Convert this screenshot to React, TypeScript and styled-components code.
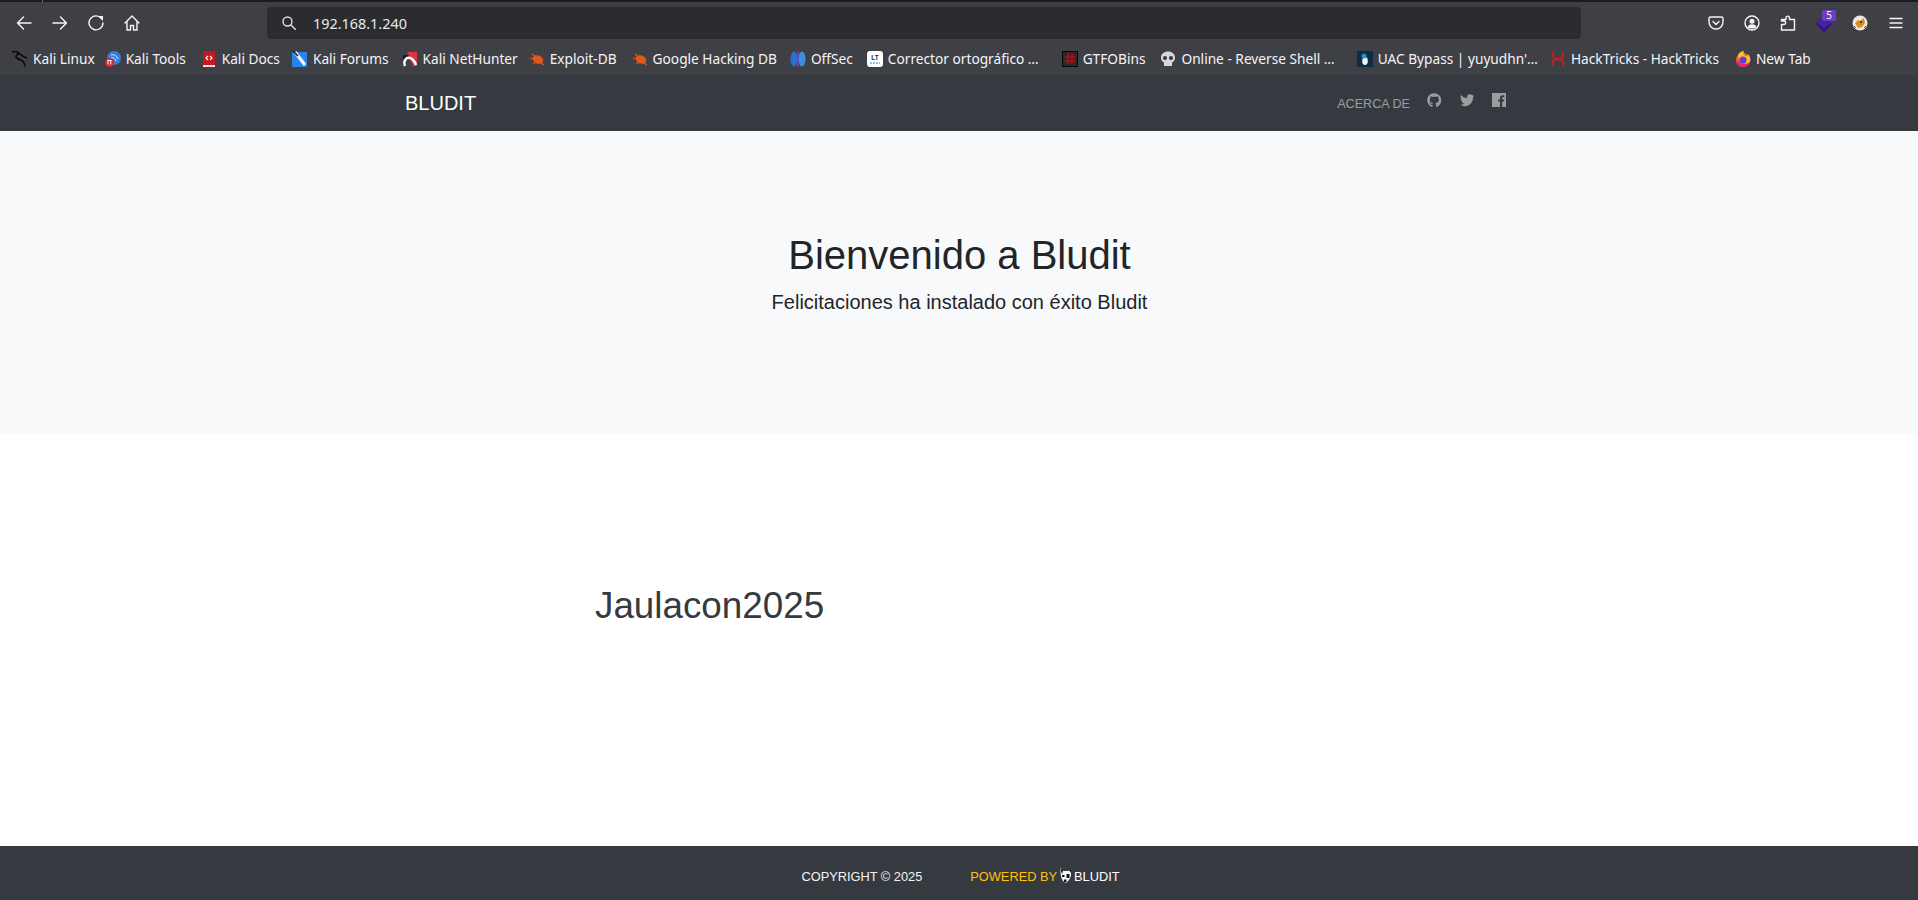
import * as React from 'react';
import styled, { createGlobalStyle } from 'styled-components';
import { FaGithub, FaTwitter } from 'react-icons/fa';

const GlobalStyle = createGlobalStyle`
  html, body {
    margin: 0;
    padding: 0;
    background: #fff;
    font-family: "Liberation Sans", Arial, sans-serif;
  }
  * { box-sizing: border-box; }
`;

type FavKind =
  | 'kali' | 'tools' | 'docs' | 'forums' | 'hunter' | 'bug' | 'offsec'
  | 'lt' | 'gtfo' | 'skull' | 'uac' | 'hack' | 'firefox';

const bookmarks: { label: string; icon: FavKind; gap: number }[] = [
  { label: 'Kali Linux', icon: 'kali', gap: 10 },
  { label: 'Kali Tools', icon: 'tools', gap: 15 },
  { label: 'Kali Docs', icon: 'docs', gap: 12 },
  { label: 'Kali Forums', icon: 'forums', gap: 13 },
  { label: 'Kali NetHunter', icon: 'hunter', gap: 11 },
  { label: 'Exploit-DB', icon: 'bug', gap: 15 },
  { label: 'Google Hacking DB', icon: 'bug', gap: 13 },
  { label: 'OffSec', icon: 'offsec', gap: 14 },
  { label: 'Corrector ortográfico …', icon: 'lt', gap: 23 },
  { label: 'GTFOBins', icon: 'gtfo', gap: 15 },
  { label: 'Online - Reverse Shell …', icon: 'skull', gap: 22 },
  { label: "UAC Bypass | yuyudhn'…", icon: 'uac', gap: 12 },
  { label: 'HackTricks - HackTricks', icon: 'hack', gap: 16 },
  { label: 'New Tab', icon: 'firefox', gap: 0 },
];

const Favicon: React.FC<{ kind: FavKind }> = ({ kind }) => {
  const art: Record<FavKind, React.ReactNode> = {
    kali: (
      <path
        d="M0 1c3-1 6 0 8 2 2 2 4 3 7 4M8 3C4 3 3 6 5 7c3 2 6 2 7 5l1 3.500M7 3.500L5 1M6 8l3 1"
        fill="none"
        stroke="#08080a"
        strokeWidth="1.6"
      />
    ),
    tools: (
      <>
        <circle cx="9" cy="7" r="7" fill="#2f80e0" />
        <path d="M6 4c3-1 6 1 7 4M6 7c2-1 4 0 5 3" fill="none" stroke="#dcebfa" strokeWidth="1" />
        <circle cx="4.500" cy="11.500" r="4.500" fill="#e0242c" />
        <path d="M3 9.500v4M5.800 9.500v4M2.500 9.500h4" stroke="#fff" strokeWidth="1" />
      </>
    ),
    docs: (
      <>
        <rect x="2" y="0" width="12" height="14" fill="#c8161e" />
        <rect x="2" y="14" width="12" height="2" fill="#e0e0e0" />
        <path d="M7 5L5 7l2 2M9 5l2 2-2 2" fill="none" stroke="#fff" strokeWidth="1.100" />
      </>
    ),
    forums: (
      <>
        <rect x="0" y="1" width="15" height="15" rx="1" fill="#2a86e6" />
        <path d="M3 1l10 13" stroke="#f2f4f6" strokeWidth="3.200" />
        <path d="M1 0l5 5" stroke="#12181f" strokeWidth="1.500" />
      </>
    ),
    hunter: (
      <>
        <path d="M5 1h10v14l-4 0z" fill="#e3323b" />
        <path d="M1 4h6L1 12z" fill="#1b1c20" />
        <path d="M3 15c-2-5 1-9 5-8 3 1 5 4 6 7" fill="none" stroke="#fff" strokeWidth="2.400" />
      </>
    ),
    bug: (
      <>
        <ellipse cx="9" cy="8.500" rx="5.500" ry="4" fill="#e3571b" transform="rotate(25 9 8.500)" />
        <path d="M1 7l4 1M3 3l4 3M4 13l3-2M15 14l-3-2" stroke="#e3571b" strokeWidth="1.100" />
      </>
    ),
    offsec: (
      <>
        <ellipse cx="4" cy="8" rx="3.500" ry="7.500" fill="#2a6fd6" />
        <ellipse cx="12" cy="8" rx="3.500" ry="7.500" fill="#3d8fd9" />
        <rect x="7.400" y="0" width="1.200" height="16" fill="#7d4bd0" />
      </>
    ),
    lt: (
      <>
        <rect x="0" y="0" width="16" height="16" rx="3" fill="#fff" />
        <text x="8" y="9" fontSize="6.500" fontWeight="700" textAnchor="middle" fill="#16324a" fontFamily="Liberation Sans">LT</text>
        <path d="M3 12h10" stroke="#2a86e6" strokeWidth="1" strokeDasharray="2 1" />
      </>
    ),
    gtfo: (
      <>
        <rect x="0.500" y="0.500" width="15" height="15" fill="#2a2a2c" stroke="#060606" />
        <path d="M6 3v10M10 3v10M3 6h10M3 10h10" stroke="#a50f12" strokeWidth="2.200" />
      </>
    ),
    skull: (
      <>
        <path d="M8 0.500c4 0 7 2.500 7 6 0 2.500-1 4-3 5v3.500H4V11.500c-2-1-3-2.500-3-5 0-3.500 3-6 7-6z" fill="#d5d7da" />
        <circle cx="5" cy="7" r="2" fill="#34363b" />
        <circle cx="11" cy="7" r="2" fill="#34363b" />
      </>
    ),
    uac: (
      <>
        <rect x="0" y="0" width="16" height="16" fill="#0c2d44" />
        <ellipse cx="8" cy="10" rx="2.800" ry="4" fill="#e8f2f7" />
        <circle cx="7" cy="5" r="2.500" fill="#2a8fd0" />
      </>
    ),
    hack: (
      <path
        d="M3 1v4c0 2 2 3 5 3s5 1 5 3v4M13 1v4c0 2-2 3-5 3s-5 1-5 3v4"
        fill="none"
        stroke="#c81e1e"
        strokeWidth="1.800"
      />
    ),
    firefox: (
      <>
        <circle cx="8" cy="9" r="7" fill="#f5701d" />
        <path d="M3 4c1 6 6 11 12 7 1-3 0-6-2-8 0 2-1 3-3 2-1-1-2-3-1-5-3 0-5 2-6 4z" fill="#ffbf2e" />
        <circle cx="8" cy="9" r="3.600" fill="#6a3bd1" />
        <path d="M1 9c0 5 4 7 7 7 4 0 6-2 7-5-3 3-8 3-11 0z" fill="#e5246f" />
      </>
    ),
  };
  return (
    <FavSvg viewBox="0 0 16 16" aria-hidden>
      {art[kind]}
    </FavSvg>
  );
};

const line = { fill: 'none', stroke: '#f4f4f6', strokeWidth: 1.4, strokeLinecap: 'round', strokeLinejoin: 'round' } as const;

const App: React.FC = () => (
  <>
    <GlobalStyle />
    <Page>
      <Browser.Strip>
        <Browser.StripMark />
      </Browser.Strip>
      <Browser.Toolbar>
        <Browser.Group>
          <Browser.Tool>
            <svg width="16" height="16" viewBox="0 0 16 16"><path d="M15 8H1.500M7.500 2L1.500 8l6 6" {...line} /></svg>
          </Browser.Tool>
          <Browser.Tool>
            <svg width="16" height="16" viewBox="0 0 16 16"><path d="M1 8h13.500M8.500 2l6 6-6 6" {...line} /></svg>
          </Browser.Tool>
          <Browser.Tool>
            <svg width="16" height="16" viewBox="0 0 16 16">
              <path d="M13.500 3.500A7 7 0 1 0 15 8" {...line} />
              <path d="M10 1h5v5z" fill="#f4f4f6" />
            </svg>
          </Browser.Tool>
          <Browser.Tool>
            <svg width="16" height="16" viewBox="0 0 16 16">
              <path d="M1 8l7-7 7 7M3 6.500V15h3.500v-4.500h3V15H13V6.500" {...line} />
            </svg>
          </Browser.Tool>
        </Browser.Group>
        <Browser.Url>
          <svg width="14" height="14" viewBox="0 0 14 14">
            <circle cx="5.500" cy="5.500" r="4.500" {...line} stroke="#e0e0e3" />
            <path d="M9 9l4.500 4.500" {...line} stroke="#e0e0e3" />
          </svg>
          <Browser.UrlText>192.168.1.240</Browser.UrlText>
        </Browser.Url>
        <Browser.Group>
          <Browser.Tool>
            <svg width="16" height="16" viewBox="0 0 16 16">
              <path d="M2.500 2h11A1.500 1.500 0 0 1 15 3.500V7a7 7 0 0 1-14 0V3.500A1.500 1.500 0 0 1 2.500 2z" {...line} />
              <path d="M5 6.500l3 3 3-3" {...line} />
            </svg>
          </Browser.Tool>
          <Browser.Tool>
            <svg width="16" height="16" viewBox="0 0 16 16">
              <circle cx="8" cy="8" r="7" {...line} />
              <circle cx="8" cy="6.300" r="2.500" fill="#f4f4f6" />
              <path d="M3.500 12c1-2 2.500-2.700 4.500-2.700s3.500.7 4.500 2.700C11 14 5 14 3.500 12z" fill="#f4f4f6" />
            </svg>
          </Browser.Tool>
          <Browser.Tool>
            <svg width="16" height="16" viewBox="0 0 16 16">
              <path d="M1.500 15V9.500H4a1.500 1.500 0 0 0 0-3.500H1.500V4.500H6V2.500a1.800 1.800 0 0 1 3.500 0v2h5V15z" {...line} />
            </svg>
          </Browser.Tool>
          <Browser.Tool>
            <svg width="18" height="18" viewBox="0 0 18 18">
              <path d="M9 5l8 5-8 8-8-8z" fill="#2b0f80" />
              <path d="M9 2l8 6-8 7-8-7z" fill="#46209f" />
            </svg>
            <Browser.Badge>5</Browser.Badge>
          </Browser.Tool>
          <Browser.Tool>
            <svg width="16" height="16" viewBox="0 0 16 16">
              <circle cx="8" cy="8" r="7.500" fill="#f0e9dd" />
              <path d="M3 8l3-3 2 1 4-3 1 5-3 4-4 1z" fill="#e08a1f" />
              <circle cx="9" cy="7" r="1" fill="#222" />
              <path d="M2 11l2 2M12 13l2-2" stroke="#555" strokeWidth="1" />
            </svg>
          </Browser.Tool>
          <Browser.Tool>
            <svg width="16" height="16" viewBox="0 0 16 16">
              <path d="M2 3.500h12M2 8h12M2 12.500h12" {...line} />
            </svg>
          </Browser.Tool>
        </Browser.Group>
      </Browser.Toolbar>
      <Browser.Bookmarks>
        {bookmarks.map((b) => (
          <Browser.Bookmark key={b.label} $gap={b.gap}>
            <Favicon kind={b.icon} />
            {b.label}
          </Browser.Bookmark>
        ))}
      </Browser.Bookmarks>

      <Nav.Bar>
        <Nav.Container>
          <Nav.Brand>BLUDIT</Nav.Brand>
          <Nav.Links>
            <Nav.Link>ACERCA DE</Nav.Link>
            <Nav.Social><FaGithub /></Nav.Social>
            <Nav.Social><FaTwitter /></Nav.Social>
            <Nav.Social>
              <svg width="14" height="14" viewBox="0 0 14 14">
                <path
                  fillRule="evenodd"
                  fill="currentColor"
                  d="M0 0h14v14h-3.800V8.600H12l.3-2.100h-2.100V5.200c0-.6.200-1 1-1h1.100V2.300c-.2 0-.9-.1-1.600-.1-1.600 0-2.700 1-2.700 2.800v1.500H6.200v2.100H8V14H0z"
                />
              </svg>
            </Nav.Social>
          </Nav.Links>
        </Nav.Container>
      </Nav.Bar>

      <Hero.Wrap>
        <Hero.Title>Bienvenido a Bludit</Hero.Title>
        <Hero.Lead>Felicitaciones ha instalado con éxito Bludit</Hero.Lead>
      </Hero.Wrap>

      <Content>
        <PostTitle>Jaulacon2025</PostTitle>
      </Content>

      <Footer.Bar>
        <Footer.Copy>COPYRIGHT © 2025</Footer.Copy>
        <Footer.Powered>
          POWERED BY
          <Footer.Logo width="11" height="16" viewBox="0 0 11 16">
            <path d="M0 0l3 4h5l3-1v6l-2 4-3 3-3-2-2-4z" fill="#f6f6f6" />
            <path d="M0 0l3 4-1 3-1-3zM6.500 7h3v4h-3zM2 8h2.500v2H2zM4 12.500h2.500v2.500H4zM9 3l2 0v3z" fill="#15171a" />
          </Footer.Logo>
          <Footer.Name>BLUDIT</Footer.Name>
        </Footer.Powered>
      </Footer.Bar>
    </Page>
  </>
);

export default App;

const Page = styled.div`
  display: flex;
  flex-direction: column;
  height: 100vh;
  overflow: hidden;
`;

const FavSvg = styled.svg`
  width: 16px;
  height: 16px;
  flex: none;
`;

const Browser = {
  Strip: styled.div`
    height: 2px;
    flex: none;
    background: #1c1b22;
    padding-left: 42px;
  `,
  StripMark: styled.div`
    width: 1px;
    height: 2px;
    background: #6a6a70;
  `,
  Toolbar: styled.div`
    height: 40px;
    flex: none;
    padding: 2px 4px 0 6px;
    display: flex;
    align-items: center;
    justify-content: space-between;
    background: #3f4046;
  `,
  Group: styled.div`
    display: flex;
    align-items: center;
  `,
  Tool: styled.div`
    position: relative;
    width: 36px;
    height: 32px;
    display: flex;
    align-items: center;
    justify-content: center;
  `,
  Badge: styled.span`
    position: absolute;
    top: 3px;
    left: 16px;
    width: 14px;
    height: 11px;
    border-radius: 2px;
    background: #6b3fc4;
    color: #f2f2f2;
    font: 10px/11px "Noto Sans", sans-serif;
    text-align: center;
  `,
  Url: styled.div`
    width: 1314px;
    height: 32px;
    margin-left: 117px;
    margin-right: auto;
    padding-left: 15px;
    display: flex;
    align-items: center;
    gap: 17px;
    border-radius: 4px;
    background: #2b2c30;
  `,
  UrlText: styled.span`
    color: #e8e8ea;
    font: 14.4px "Noto Sans", sans-serif;
  `,
  Bookmarks: styled.div`
    height: 33px;
    flex: none;
    padding-left: 12px;
    display: flex;
    align-items: center;
    background: #3f4046;
    white-space: nowrap;
  `,
  Bookmark: styled.div<{ $gap: number }>`
    display: flex;
    align-items: center;
    gap: 5px;
    margin-right: ${(p) => p.$gap}px;
    color: #f4f4f6;
    font: 13.7px "Noto Sans", sans-serif;
  `,
};

const Nav = {
  Bar: styled.nav`
    height: 56px;
    flex: none;
    background: #343a40;
  `,
  Container: styled.div`
    width: 1140px;
    height: 100%;
    margin: 0 auto;
    padding: 0 23px 0 16px;
    display: flex;
    align-items: center;
    justify-content: space-between;
  `,
  Brand: styled.div`
    color: #fff;
    font-size: 20px;
  `,
  Links: styled.div`
    display: flex;
    align-items: center;
    gap: 18px;
  `,
  Link: styled.span`
    margin-top: 2px;
    margin-right: -1px;
    color: rgba(255, 255, 255, 0.5);
    font-size: 12.6px;
  `,
  Social: styled.span`
    display: flex;
    margin-top: -6px;
    color: rgba(255, 255, 255, 0.5);
    font-size: 14.5px;
  `,
};

const Hero = {
  Wrap: styled.header`
    height: 302px;
    flex: none;
    padding: 100px 0 0 1px;
    background: #f8f9fa;
    color: #212529;
    text-align: center;
  `,
  Title: styled.h1`
    margin: 0 0 8px;
    font-size: 40px;
    font-weight: 500;
    line-height: 1.2;
  `,
  Lead: styled.p`
    margin: 0;
    font-size: 20px;
    font-weight: 300;
    line-height: 1.5;
  `,
};

const Content = styled.main`
  flex: 1;
  width: 760px;
  margin: 0 auto;
  padding: 149px 15px 0 16px;
`;

const PostTitle = styled.h2`
  margin: 0;
  color: #343a40;
  font-size: 36.8px;
  font-weight: 400;
  line-height: 48px;
`;

const Footer = {
  Bar: styled.footer`
    height: 54px;
    flex: none;
    padding: 6px 0 0 3px;
    display: flex;
    align-items: center;
    justify-content: center;
    gap: 48px;
    background: #343a40;
    color: #fff;
    font-size: 12.8px;
  `,
  Copy: styled.span`
    color: #f4f4f4;
  `,
  Powered: styled.span`
    display: flex;
    align-items: center;
    gap: 3px;
    color: #ffc107;
  `,
  Logo: styled.svg`
    margin-top: -3px;
  `,
  Name: styled.span`
    color: #fff;
  `,
};
